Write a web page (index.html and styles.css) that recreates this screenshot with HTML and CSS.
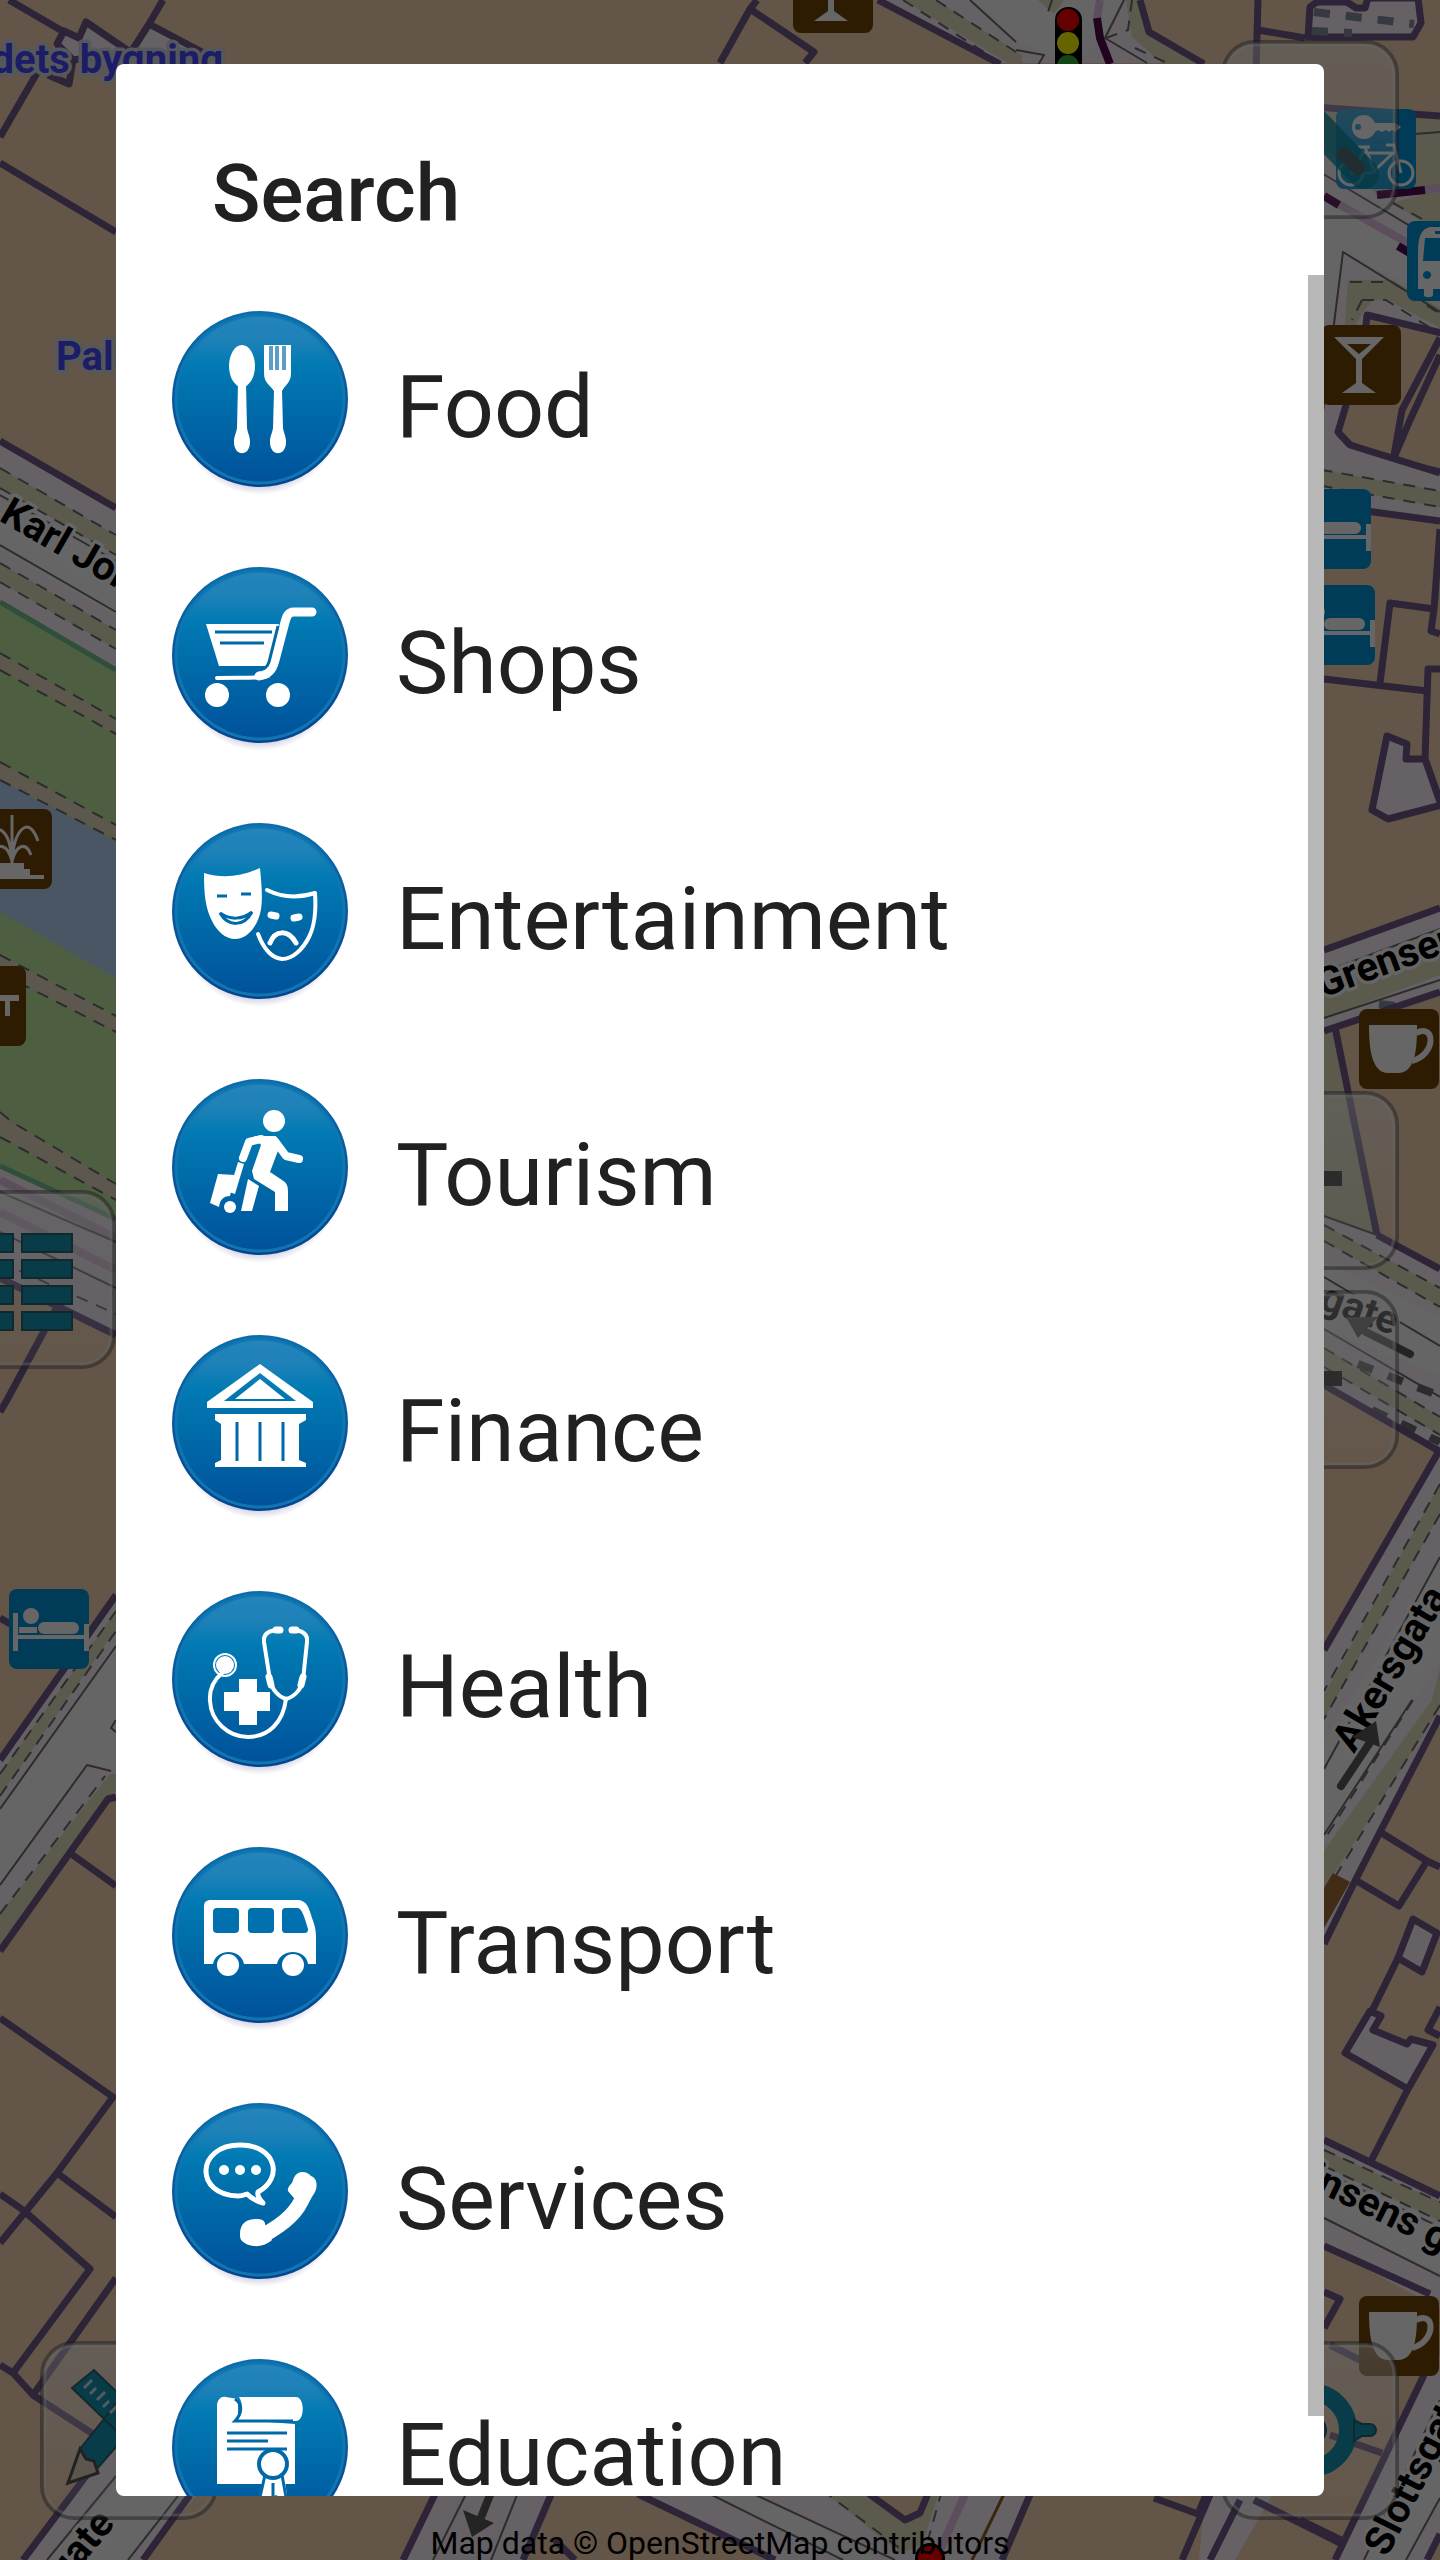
FILE: index.html
```
<!DOCTYPE html>
<html lang="en">
<head>
    <meta charset="UTF-8">
    <meta name="viewport" content="width=device-width, initial-scale=1.0">
    <title>Search</title>
    <link rel="stylesheet" href="styles.css">
</head>
<body>
    <svg class="map" viewBox="0 0 1440 2560" preserveAspectRatio="xMidYMid slice" aria-hidden="true">
        <defs>
            <linearGradient id="glass" x1="0" y1="0" x2="0" y2="1">
                <stop offset="0" stop-color="#fff" stop-opacity=".5"/>
                <stop offset="1" stop-color="#fff" stop-opacity=".08"/>
            </linearGradient>
            <g id="poi-bed">
                <rect class="poi-blue" width="80" height="80" rx="8"/>
                <path class="poi-white" d="M4 24h5v22h66V35h5v27h-5V50H9v12H4zM10 38h18v6H10z"/>
                <rect class="poi-white" x="29" y="33" width="41" height="12" rx="6"/>
                <circle class="poi-white" cx="22" cy="27" r="8"/>
            </g>
            <g id="poi-bar">
                <rect class="poi-brown" width="80" height="80" rx="8"/>
                <path class="poi-white" fill-rule="evenodd" d="M13 12h50L41 34v24l14 10H21l14-10V34zM26 19l12 10 12-10z"/>
            </g>
            <g id="poi-cafe">
                <rect class="poi-brown" width="80" height="80" rx="8"/>
                <path class="poi-white" d="M10 16h48c0 22-1 48-19 48H29C12 64 10 38 10 16z"/>
                <path class="cup-handle" d="M57 24c20-10 20 22-4 28"/>
            </g>
            <g id="glass-button">
                <rect class="glass-edge" x="2" y="2" width="174" height="175" rx="32"/>
                <rect class="glass-inner" x="5" y="5" width="168" height="169" rx="29"/>
            </g>
        </defs>

        <!-- ground -->
        <rect class="building" width="1440" height="2560"/>

        <!-- north west blocks -->
        <path class="yard wall" d="M57 44l7-13 15 7 7-16 44 30-57 8z"/>
        <path class="yard" d="M149 24l53 28v20h-74z"/>
        <path class="wall" d="M9 0l55 32M163 0l-14 24-18 28M149 24l53 28M73 60l-4 24-21-9M37 73L0 137M0 163l116 69"/>

        <!-- Karl Johans gate and the park -->
        <path class="road" d="M0 441l116 67v165L0 602z"/>
        <path class="asphalt" d="M0 488l116 67v62L0 550z"/>
        <path class="pavement" d="M0 468l116 67v20L0 488zM0 563l116 67v19L0 582z"/>
        <path class="kerb" d="M0 545l116 67M0 495l116 66"/>
        <path class="dash" d="M0 468l116 67M0 488l116 67M0 563l116 67M0 582l116 67"/>
        <path class="wall" d="M0 441l116 67"/>
        <path class="park" d="M0 602l116 68v549L0 1166z"/>
        <path class="water" d="M0 780l116 62v136L0 912z"/>
        <path class="trail" d="M0 653l116 66v15L0 670zM0 762l116 63v15L0 780zM0 955l116 61v16L0 973zM0 1112l12 10 104 62v16L0 1137z"/>
        <path class="dash" d="M0 653l116 66M0 670l116 64M0 762l116 63M0 780l116 60M0 955l116 61M0 973l116 59M0 1112l12 10 104 62M0 1137l116 63"/>
        <path class="hedge" d="M0 602l116 68M0 1166l116 53"/>
        <path class="road" d="M0 1169l116 53v113L0 1278z"/>
        <path class="tram" d="M0 1180l116 58M0 1212l116 58"/>
        <path class="kerb" d="M0 1192l116 50M0 1232l116 56"/>
        <path class="dash" d="M0 1262l116 52"/>
        <path class="wall" d="M0 1278l116 57M57 1307l-50 93-7 12"/>

        <!-- south west street -->
        <path class="road" d="M0 1760l116-165v202l-8 2L0 1951z"/>
        <path class="asphalt" d="M0 1809l116-163v125l-29-6L0 1885z"/>
        <path class="pavement" d="M0 1774l116-163v18L0 1796zM0 1914l110-140h6v16L0 1946z"/>
        <path class="dash" d="M0 1774l116-163M0 1796l116-165M0 1914l105-138"/>
        <path class="kerb" d="M0 1809l116-163M0 1885l87-120 24 6M116 1720l-5 8 5 4"/>
        <path class="wall" d="M0 1760l116-165M0 1618l12 7M0 1951l108-152 8-2M70 1853l46 33M0 2018l113 79-56 76-57 70M57 2173l59 44M0 2194l23 16 67 59-77 104M0 2365l13 8 20 22 83-117M33 2395l74 48"/>
        <path class="road" d="M23 2560l93-124 80 60-53 64z"/>
        <path class="asphalt" d="M47 2560l69-76 60 12-48 64z"/>
        <path class="kerb" d="M47 2560l69-84M128 2560l50-64"/>
        <path class="wall" d="M23 2560l93-124M190 2495l-47 65"/>

        <!-- south edge -->
        <path class="road" d="M437 2490h116l-30 70H403z"/>
        <path class="kerb" d="M468 2490l-35 70M519 2490l-28 70"/>
        <path class="wall" d="M437 2490l-34 70M553 2490l-30 70"/>
        <path class="arrow-line" d="M492 2490l-12 30"/>
        <path class="arrow" d="M463 2510l31 13-22 14z"/>
        <path class="road" d="M630 2490h402l-30 70H775z"/>
        <path class="asphalt" d="M702 2490h50l130 70h-39z"/>
        <path class="pavement" d="M822 2490h118l-18 55-22 8z"/>
        <path class="building" d="M869 2490l36 30 15-7 9-23z"/>
        <path class="kerb" d="M702 2490l141 70M745 2490l150 70"/>
        <path class="dash" d="M822 2490l80 60M942 2490l-14 50"/>
        <path class="tram" d="M967 2490l-27 60"/>
        <path class="rail" d="M1006 2490l-34 70"/>
        <path class="wall" d="M638 2494l137 66M869 2494l36 26 15-7 9-22M1032 2490l-30 70M555 2540l20 20"/>
        <path class="road" d="M1205 2490h70l-40 70h-36z"/>
        <path class="wall" d="M1154 2498l44 16 10-24M1212 2490l-30 70M1254 2500l94 47M1240 2500l-30 60"/>

        <!-- north crossing -->
        <path class="road" d="M878 0h262l9 32 55 31h-204z"/>
        <path class="asphalt" d="M970 0h154l-19 38-30 25-59-21z"/>
        <path class="pavement" d="M903 0h33l86 55v8h-14zM1038 0h26l-10 14zM1126 0h14l9 33 49 30h-36l-30-26z"/>
        <path class="dash" d="M903 0l98 63M936 0l80 52M1052 0l-4 12 20 6M1106 38l22-8 4-30M1135 48l32 15"/>
        <path class="kerb" d="M970 0l46 42M1016 50l28 5-6 10M1124 0l-19 38 42 25"/>
        <path class="tram" d="M1100 0l-3 18"/>
        <path class="tram-dark" d="M1097 18l3 20 10 26"/>
        <path class="wall" d="M757 0l-7 9-30 54M750 9l64 43-9 11M878 0l122 64M1140 0l9 32 55 32M1258 0l-3 110M1258 30l47 8"/>
        <path class="yard wall" d="M1308 37l2-30 7-5h30l9 6h9l3-10h50l3 25-8 14z"/>
        <path class="block-dash" d="M1314 12l100 12M1312 31l40 2"/>

        <!-- east crossing -->
        <path class="road" d="M1300 106l50 4 90 5v358l-140-28z"/>
        <path class="asphalt" d="M1300 180l140 80v40l-97-48-24 160h-19z"/>
        <path class="pavement" d="M1324 112l116 6v70l-63 7-53-50zM1393 203l47-14v45zM1348 280h44l48 28v20l-52-28h-16l-14 20-6 15-8-1z"/>
        <path class="kerb" d="M1300 160l140 84M1415 134l25-2M1440 312l-97-60-20 160"/>
        <path class="dash" d="M1350 282h42l48 32M1362 300h24l54 34M1362 300l-10 20M1393 203l47 26"/>
        <path class="tram" d="M1324 196l98 55M1377 195l63-7"/>
        <path class="tram-dark" d="M1324 196l15 9M1398 246l15 9M1377 195l48-5"/>
        <path class="wall" d="M1300 106l140 10"/>
        <path class="building wall" d="M1450 335l-83-20-3 30-26 87 12 13 43 16 60 14z"/>
        <path class="wall" d="M1440 338l-38 72-9 51M1440 355l-30 65-17 40"/>
        <path class="road" d="M1300 440l50 8 90 26v47l-140-22z"/>
        <path class="pavement" d="M1300 466l140 25v16l-140-25z"/>
        <path class="dash" d="M1300 466l140 25M1300 482l140 25"/>
        <path class="wall" d="M1338 432l12 13 90 28M1300 502l140 19M1440 529l-6 80-3 22 9 3M1434 609l-44-6-10 80M1324 679l103 12M1440 669h-12l-3 90 15 42"/>
        <path class="yard wall" d="M1387 736l20 8-1 15h19l16 46-53 14-16-9z"/>

        <!-- Grensen -->
        <path class="road" d="M1324 950l116-42v84l-116 39z"/>
        <path class="pavement" d="M1324 985l116-42v32l-116 43zM1324 1031l11-4 42 208-53-19z"/>
        <path class="kerb" d="M1324 972l116-43M1324 1018l116-38"/>
        <path class="block-dash" d="M1379 1004l16 2"/>
        <path class="wall" d="M1324 950l116-42M1324 1031l116-39M1335 1027l42 208"/>
        <path class="road" d="M1324 1216l53 19 63 34v182l-116-66z"/>
        <path class="asphalt" d="M1324 1262l116 54v60l-116-48z"/>
        <path class="pavement" d="M1324 1225l116 63v19l-116-66zM1324 1348l116 69v18l-116-68z"/>
        <path class="dash" d="M1324 1225l116 63M1324 1241l116 66M1324 1348l116 69M1324 1367l116 68"/>
        <path class="kerb" d="M1324 1216l53 19M1324 1277l116 69M1324 1329l116 68"/>
        <path class="block-dash dark" d="M1358 1364l82 32M1372 1410l68 32"/>
        <path class="wall" d="M1377 1235l63 34"/>

        <!-- Akersgata -->
        <path class="road" d="M1440 1451l-116 199v294l116-228z"/>
        <path class="asphalt" d="M1440 1557l-116 185v100l116-180z"/>
        <path class="pavement" d="M1440 1484l-116 211v24l116-205zM1432 1700l-108 151v38l116-181v-40z"/>
        <path class="dash" d="M1440 1484l-116 207M1440 1514l-116 205M1413 1700l-89 140M1440 1705l-116 190"/>
        <path class="kerb" d="M1440 1557l-116 212M1412 1700l-88 135"/>
        <path class="building" d="M1440 1716l-60 116-25 49-31 63v196l116 56z"/>
        <path class="shed" d="M1333 1873l17 9-26 46v-40z"/>
        <path class="wall" d="M1324 1385l115 66-115 199M1440 1716l-60 116-25 49-31 63M1380 1832l47 29 13 6M1427 1861l-28 45-42-25M1398 1958l-27 55M1408 2089l-38 74M1440 2007l-12 23 12 6"/>
        <path class="yard wall" d="M1413 1919l24 14-15 39-24-14zM1370 2011l11 5-8 14 34 14 4-5 22 6-25 44-63-36z"/>

        <!-- south east streets -->
        <path class="road" d="M1324 2140l116 56v113l-116-63z"/>
        <path class="asphalt" d="M1324 2176l116 54v44l-116-56z"/>
        <path class="pavement" d="M1324 2150l116 52v19l-116-55z"/>
        <path class="dash" d="M1324 2150l116 52M1324 2166l116 55"/>
        <path class="kerb" d="M1324 2172l116 55M1324 2218l116 58"/>
        <path class="wall" d="M1324 2140l116 56M1324 2246l106 48M1324 2292l16 7-16 29M1330 2345l50 25M1330 2435l52 18"/>
        <path class="road" d="M1424 2375l16-20v180l-13 25h-92z"/>
        <path class="asphalt" d="M1440 2400v98l-34 62h-42z"/>
        <path class="kerb" d="M1440 2400l-76 160M1440 2498l-34 62"/>
        <path class="wall" d="M1424 2375l-89 185M1427 2560l13-26M1300 2520l45 22"/>

        <!-- points of interest -->
        <use href="#poi-bar" x="793" y="-47"/>
        <rect x="1055" y="7" width="27" height="90" rx="13"/>
        <circle class="light-red" cx="1068" cy="20" r="11"/>
        <circle class="light-yellow" cx="1068" cy="43" r="11"/>
        <circle class="light-green" cx="1068" cy="66" r="11"/>
        <circle cx="930" cy="2558" r="15"/>
        <circle class="light-red" cx="930" cy="2558" r="12"/>
        <g transform="translate(1336 109)">
            <rect class="poi-blue" width="80" height="80" rx="8"/>
            <path class="poi-white" fill-rule="evenodd" d="M28 6c6 0 9 4 11 8h20l6 4-6 5-3-2-3 2-3-2-4 2-4-2-3 2c-2 4-5 7-11 7C12 30 12 6 28 6zM22 15a3 3 0 1 0 0 6 3 3 0 0 0 0-6z"/>
            <g class="bike">
                <circle cx="15" cy="64" r="12"/>
                <circle cx="65" cy="64" r="12"/>
                <path d="M15 64l12-20h30L36 64H15M22 38h12M29 38l10 26M50 36h8l7 28"/>
            </g>
        </g>
        <g transform="translate(1407 221)">
            <rect class="poi-blue" width="80" height="80" rx="8"/>
            <path class="poi-white" fill-rule="evenodd" d="M11 68V30c0-16 4-22 12-24h40v62H26v6c0 3-9 3-9 0v-6zM18 17l-2 23h50V17zM20 50a4 4 0 1 0 .1 0zM28 10h30v3H28z"/>
        </g>
        <use href="#poi-bar" x="1321" y="325"/>
        <use href="#poi-bed" x="1291" y="489"/>
        <use href="#poi-bed" x="1295" y="585"/>
        <use href="#poi-cafe" x="1359" y="1009"/>
        <use href="#poi-cafe" x="1359" y="2296"/>
        <use href="#poi-bed" x="9" y="1589"/>
        <g transform="translate(-28 809)">
            <rect class="poi-brown" width="80" height="80" rx="8"/>
            <path class="poi-white" d="M14 54h38v6h6v6h14v4H14z"/>
            <path class="spray" d="M40 54V6M40 52C38 22 26 10 14 32M40 52C42 22 56 4 66 32M40 52c-4-16-14-20-19-6M40 52c4-16 14-20 19-6"/>
        </g>
        <g transform="translate(-54 966)">
            <rect class="poi-brown" width="80" height="80" rx="8"/>
            <path class="poi-white" d="M20 29h53v6h-9v15h-5V35H20z"/>
        </g>

        <!-- street names -->
        <text class="place" x="223" y="73" text-anchor="end">dets bygning</text>
        <text class="place" x="56" y="370">Pal</text>
        <text class="street" transform="translate(-2 520) rotate(30)">Karl Joh</text>
        <text class="street" transform="translate(1322 998) rotate(-20)">Grensen</text>
        <text class="street" transform="translate(1318 1308) rotate(20)">gate</text>
        <text class="street" transform="translate(1354 1754) rotate(-59)">Akersgata</text>
        <text class="street" transform="translate(1306 2186) rotate(26)">insens gate</text>
        <text class="street" transform="translate(1387 2558) rotate(-63)">Slottsgata</text>
        <text class="street" transform="translate(116 2524) rotate(-50)" text-anchor="end">gate</text>
        <path class="arrow-line" d="M1341 1786l28-42M1410 1354l-44-22"/>
        <path class="arrow" d="M1380 1747l-4-26-24 16zM1346 1317l32 0-20 21z"/>

        <!-- map controls -->
        <use href="#glass-button" x="-62" y="1190"/>
        <path class="teal" d="M-30 1234h43v18h-43zM22 1234h50v18H22zM-30 1260h43v18h-43zM22 1260h50v18H22zM-30 1286h43v18h-43zM22 1286h50v18H22zM-30 1312h43v18h-43zM22 1312h50v18H22z"/>
        <use href="#glass-button" x="40" y="2341"/>
        <path class="teal" d="M72 2388l22-18 60 58-22 18zM68 2483l12-34 60-75 22 20-66 76z"/>
        <path class="nib" d="M68 2483l12-34 6 10 8 2 4 12z"/>
        <path class="ticks" d="M84 2388l8-8M90 2394l6-6M97 2400l8-8M103 2407l6-6M110 2413l8-8"/>
        <use href="#glass-button" x="1221" y="40"/>
        <path class="clip" d="M1306 114l58 60"/>
        <path class="clip-hole" d="M1344 154l14 14"/>
        <use href="#glass-button" x="1221" y="1091"/>
        <use href="#glass-button" x="1221" y="1290"/>
        <path class="zoom-bar" d="M1280 1171h62v15h-62zM1280 1371h62v15h-62z"/>
        <use href="#glass-button" x="1221" y="2341"/>
        <circle class="target" cx="1310" cy="2430" r="38"/>
        <path class="teal" d="M1354 2420l8 4h8a6 6 0 0 1 0 12h-8l-8 5z"/>
        <circle class="teal" cx="1312" cy="2430" r="14"/>
    </svg>
    <p class="attribution">Map data © OpenStreetMap contributors</p>

    <div class="scrim">
        <section class="dialog" role="dialog" aria-labelledby="dialogTitle">
            <svg class="defs" width="0" height="0" aria-hidden="true">
                <defs>
                    <linearGradient id="disc" x1="0" y1="0" x2="0" y2="1">
                        <stop offset="0" stop-color="#2584bb"/>
                        <stop offset=".16" stop-color="#1d81b8"/>
                        <stop offset=".3" stop-color="#007ab3"/>
                        <stop offset="1" stop-color="#00529a"/>
                    </linearGradient>
                    <linearGradient id="rim" x1="0" y1="0" x2="0" y2="1">
                        <stop offset="0" stop-color="#0a6dac"/>
                        <stop offset="1" stop-color="#06438e"/>
                    </linearGradient>
                    <radialGradient id="shade">
                        <stop offset=".9" stop-color="#22237a" stop-opacity=".2"/>
                        <stop offset="1" stop-color="#22237a" stop-opacity="0"/>
                    </radialGradient>
                    <g id="badge">
                        <ellipse cx="88" cy="92" rx="85" ry="92" fill="url(#shade)"/>
                        <circle cx="88" cy="88" r="88" fill="url(#rim)"/>
                        <circle cx="88" cy="88" r="84" fill="url(#disc)" stroke="#0f76b1" stroke-width="3"/>
                    </g>
                </defs>
            </svg>
            <h1 class="title" id="dialogTitle">Search</h1>
            <div class="scroller">
                <ul class="list">
                    <li>
                        <button type="button" class="item">
                            <svg class="icon" viewBox="0 0 176 192">
                                <use href="#badge"/>
                                <ellipse cx="70" cy="55" rx="13" ry="21"/>
                                <path d="M66 72h8l1 45c1 6 3 8 3 14 0 15-16 15-16 0 0-6 2-8 3-14z"/>
                                <path d="M92 34h27v28c0 10-6 12-9 18l1 37c1 6 3 8 3 14 0 15-16 15-16 0 0-6 2-8 3-14l1-37c-4-6-10-8-10-18z"/>
                                <path class="tines" d="M99 35v24M105 35v24M112 35v24"/>
                            </svg>
                            <span>Food</span>
                        </button>
                    </li>
                    <li>
                        <button type="button" class="item">
                            <svg class="icon" viewBox="0 0 176 192">
                                <use href="#badge"/>
                                <path class="line" stroke-width="9" d="M140 45h-18c-7 0-8 6-10 14l-9 34c-3 12-8 14-16 16"/>
                                <path class="line" stroke-width="4" d="M96 109c-8 3-18 1-51 2"/>
                                <path d="M34 57h73l-10 42H47z"/>
                                <path class="cut" stroke-width="3" d="M43 65h57"/>
                                <path class="cut" stroke-width="7" d="M48 76h44"/>
                                <path class="cut" stroke-width="3" d="M106 59l-9 36c-2 6-5 7-9 8"/>
                                <circle cx="45" cy="128" r="12"/>
                                <circle cx="106" cy="128" r="12"/>
                            </svg>
                            <span>Shops</span>
                        </button>
                    </li>
                    <li>
                        <button type="button" class="item">
                            <svg class="icon" viewBox="0 0 176 192">
                                <use href="#badge"/>
                                <path d="M32 50c20 6 38 3 56-5 2 22 4 40-3 54-5 10-13 17-22 17-10 0-18-8-23-18-7-14-8-28-8-48z"/>
                                <path class="cut" stroke-width="4" d="M48 90c8 14 24 14 32-1-10 8-22 8-32 1z"/>
                                <path class="cut" stroke-width="8" d="M45 73h10M69 71h10"/>
                                <path class="line" stroke-width="4" d="M95 67c16 8 32 8 48 3 1 14 1 30-6 44-6 12-16 22-27 22-11-1-19-12-24-25"/>
                                <path class="line" stroke-width="5" d="M98 120c5-13 18-14 26 0"/>
                                <path class="line" stroke-width="7" d="M99 92l5 1M122 95l5-1"/>
                            </svg>
                            <span>Entertainment</span>
                        </button>
                    </li>
                    <li>
                        <button type="button" class="item">
                            <svg class="icon" viewBox="0 0 176 192">
                                <use href="#badge"/>
                                <circle cx="102" cy="42" r="11"/>
                                <path class="line" stroke-width="8" d="M71 79l6-16 12-3M103 62l11 15 13 3"/>
                                <path d="M82 57h22l3 12-9 24 12 8c5 3 6 6 6 12v19h-13v-19l-21-13-2-8 9-26z"/>
                                <path d="M76 100l11 7-7 25H69z"/>
                                <path d="M66 83l6 2-9 30-6-2z"/>
                                <path d="M46 95l17 1-5 21c-7 0-10 4-11 11l-9-4z"/>
                                <circle cx="58" cy="128" r="6"/>
                            </svg>
                            <span>Tourism</span>
                        </button>
                    </li>
                    <li>
                        <button type="button" class="item">
                            <svg class="icon" viewBox="0 0 176 192">
                                <use href="#badge"/>
                                <path fill-rule="evenodd" d="M88 29l53 38v6H35v-6zM88 38L52 66h72z"/>
                                <path d="M88 44l25 20H63z"/>
                                <path d="M43 79h91v6l-7 4v36l7 3v4H43v-4l6-3V89l-6-4z"/>
                                <path class="cut" stroke-width="9" d="M65 87v39M111 87v39"/>
                                <path class="cut" stroke-width="14" d="M88 87v39"/>
                            </svg>
                            <span>Finance</span>
                        </button>
                    </li>
                    <li>
                        <button type="button" class="item">
                            <svg class="icon" viewBox="0 0 176 192">
                                <use href="#badge"/>
                                <path class="line" stroke-width="4" d="M104 39c-8 1-13 4-12 12l6 38c2 10 9 17 16 19 8-2 15-9 17-19l4-38c1-8-4-11-12-12"/>
                                <path class="line" stroke-width="7" d="M104 39h4M120 39h4M97 86l2 8M131 86l-2 8"/>
                                <path class="line" stroke-width="4" d="M114 108c-3 24-18 38-38 38-20 0-37-16-38-36-1-14 5-22 12-28"/>
                                <circle cx="53" cy="74" r="9"/>
                                <circle class="line" stroke-width="2" cx="53" cy="74" r="11"/>
                                <path d="M67 88h18v13h13v19H85v14H67v-14H52v-19h15z"/>
                            </svg>
                            <span>Health</span>
                        </button>
                    </li>
                    <li>
                        <button type="button" class="item">
                            <svg class="icon" viewBox="0 0 176 192">
                                <use href="#badge"/>
                                <path d="M39 53h86c10 0 12 8 15 18 3 8 4 12 4 20v26h-8c-2-16-28-16-31 0H72c-3-16-28-16-31 0h-9V60c0-5 2-7 7-7z"/>
                                <rect class="hole" x="41" y="61" width="26" height="25" rx="4"/>
                                <rect class="hole" x="76" y="61" width="26" height="25" rx="4"/>
                                <path class="hole" d="M114 61h11c4 0 6 4 11 21 0 3-1 4-4 4h-18c-3 0-4-1-4-4V65c0-3 1-4 4-4z"/>
                                <circle cx="56" cy="118" r="11"/>
                                <circle cx="121" cy="118" r="11"/>
                            </svg>
                            <span>Transport</span>
                        </button>
                    </li>
                    <li>
                        <button type="button" class="item">
                            <svg class="icon" viewBox="0 0 176 192">
                                <use href="#badge"/>
                                <path class="line" stroke-width="5" d="M86 89c26-14 18-47-18-47-44 0-46 50-2 51 4 0 6-1 9-2 5 5 9 7 16 9-4-4-6-7-5-11z"/>
                                <circle cx="52" cy="67" r="5"/>
                                <circle cx="68" cy="67" r="5"/>
                                <circle cx="84" cy="67" r="5"/>
                                <path class="line" stroke-width="15" d="M132 92c-6 16-18 28-42 41"/>
                                <path d="M116 88c-1-5 4-6 5-11 3-10 13-10 18-4 6 2 7 10 4 16l-11 18z"/>
                                <path d="M68 131c0-10 6-15 16-15 8 0 9 2 10 9l6 12c-10 9-24 7-30 1-2-2-2-4-2-7z"/>
                            </svg>
                            <span>Services</span>
                        </button>
                    </li>
                    <li>
                        <button type="button" class="item">
                            <svg class="icon" viewBox="0 0 176 192">
                                <use href="#badge"/>
                                <path d="M45 46c1-6 4-9 9-8l12 2v21l57 4v60H45z"/>
                                <path d="M67 38h57c9 0 9 24 0 24H64c6-8 8-16 3-24z"/>
                                <path class="cut" stroke-width="3" d="M63 40c9 6 6 16 0 22h58M55 74h60M55 82h41M55 90h60"/>
                                <path d="M91 114h21l4 30-12-8-16 8z"/>
                                <path class="cut" stroke-width="3" d="M93 116l-5 22M110 116l4 22M101 124v14"/>
                                <circle class="cut-fill" stroke-width="4" cx="101" cy="105" r="14"/>
                            </svg>
                            <span>Education</span>
                        </button>
                    </li>
                </ul>
                <div class="thumb"></div>
            </div>
        </section>
    </div>
</body>
</html>
```
FILE: styles.css
```
body {
    margin: 0;
    height: 100vh;
    overflow: hidden;
    background: #f8d5b2;
    font-family: Roboto, "Liberation Sans", sans-serif;
    color: #212121;
}

/* map behind the dialog */
.map {
    position: absolute;
    inset: 0;
    width: 100%;
    height: 100%;
}
.building {
    fill: #f8d5b2;
}
.road, .yard {
    fill: #fcf3fc;
}
.asphalt {
    fill: #fdfdfd;
}
.pavement {
    fill: #e4e1be;
}
.park {
    fill: #c3eba3;
}
.trail {
    fill: #e6dcc0;
}
.water {
    fill: #b9d7fa;
}
.shed {
    fill: #a27137;
}
.wall, .kerb, .dash, .hedge, .tram, .tram-dark, .rail, .block-dash {
    stroke-linejoin: round;
}
.wall {
    stroke: #705a8c;
    stroke-width: 7;
}
.wall:not(.building):not(.yard), .kerb, .dash, .hedge, .tram, .tram-dark, .rail, .block-dash {
    fill: none;
}
.kerb {
    stroke: #6e6e6e;
    stroke-width: 2;
}
.dash {
    stroke: #6e6e6e;
    stroke-width: 2;
    stroke-dasharray: 12 9;
}
.hedge {
    stroke: #76c594;
    stroke-width: 5;
}
.tram {
    stroke: #e6c2e6;
    stroke-width: 8;
}
.tram-dark {
    stroke: #520a50;
    stroke-width: 8;
}
.rail {
    stroke: #8a6420;
    stroke-width: 3;
}
.block-dash {
    stroke: #8a8ea0;
    stroke-width: 8;
    stroke-dasharray: 16 16;
}
.block-dash.dark {
    stroke: #6e6e6e;
}
.poi-blue {
    fill: #0093dc;
}
.poi-brown {
    fill: #734607;
}
.poi-white {
    fill: #fff;
}
.cup-handle, .bike, .spray {
    fill: none;
    stroke: #fff;
    stroke-width: 6;
}
.bike, .spray {
    stroke-width: 3;
}
.light-red {
    fill: #ff0000;
}
.light-yellow {
    fill: #fffa00;
}
.light-green {
    fill: #2fae35;
}
.place, .street {
    font-size: 40px;
    font-weight: 700;
    paint-order: stroke;
    stroke: #fff;
    stroke-width: 7;
    stroke-linejoin: round;
}
.place {
    fill: #4a46ff;
    stroke: #d4dce4;
}
.arrow {
    fill: #5b5b5b;
}
.arrow-line {
    fill: none;
    stroke: #5b5b5b;
    stroke-width: 8;
    stroke-linecap: round;
}
.glass-edge {
    fill: url(#glass);
    stroke: #444;
    stroke-opacity: .45;
    stroke-width: 4;
}
.glass-inner {
    fill: none;
    stroke: #fff;
    stroke-opacity: .4;
    stroke-width: 3;
}
.teal {
    fill: #1497b4;
    stroke: #2c6470;
    stroke-width: 2;
}
.nib {
    fill: #e8d8c4;
    stroke: #555;
    stroke-width: 3;
}
.ticks {
    stroke: #cfe4e8;
    stroke-width: 3;
}
.clip {
    stroke: #1092a8;
    stroke-width: 30;
    stroke-linecap: round;
    opacity: .8;
}
.clip-hole {
    stroke: #56707a;
    stroke-width: 14;
    stroke-linecap: round;
}
.zoom-bar {
    fill: #6e6e6e;
}
.target {
    fill: none;
    stroke: #1497b4;
    stroke-width: 18;
}
.attribution {
    position: absolute;
    inset: auto 0 0;
    margin: 0;
    font-size: 32px;
    line-height: 34px;
    text-align: center;
    color: #000;
}

/* dialog */
.scrim {
    position: absolute;
    inset: 0;
    box-sizing: border-box;
    display: flex;
    padding: 64px 116px;
    background: rgba(0, 0, 0, 0.6);
}
.dialog {
    flex: 1;
    min-width: 0;
    display: flex;
    flex-direction: column;
    background: #fff;
    border-radius: 8px;
    overflow: hidden;
}
.defs {
    position: absolute;
}
.title {
    margin: 0;
    padding: 82px 96px 33px;
    font-size: 80px;
    line-height: 96px;
    font-weight: 500;
}
.scroller {
    position: relative;
    flex: 1;
    min-height: 0;
}
.list {
    box-sizing: border-box;
    height: 100%;
    margin: 0;
    padding: 4px 0;
    list-style: none;
    overflow-y: auto;
    scrollbar-width: none;
}
.thumb {
    position: absolute;
    top: 0;
    right: 0;
    width: 16px;
    height: 96.4%;
    background: #b8b8b8;
}
.item {
    display: flex;
    align-items: center;
    gap: 48px;
    width: 100%;
    padding: 32px 56px;
    border: none;
    background: none;
    font: inherit;
    font-size: 88px;
    line-height: 104px;
    color: inherit;
    text-align: left;
    cursor: pointer;
}
.item:hover {
    background: #f2f2f2;
}

/* category icons */
.icon {
    flex: none;
    width: 176px;
    height: 192px;
    fill: #fff;
}
.line {
    fill: none;
    stroke: #fff;
    stroke-linecap: round;
    stroke-linejoin: round;
}
.cut {
    fill: none;
    stroke: #0069a8;
    stroke-width: 3;
}
.tines {
    stroke: #5c9dc8;
    stroke-width: 4;
}
.cut-fill {
    stroke: #0069a8;
}
.hole {
    fill: #0070ae;
}
```
